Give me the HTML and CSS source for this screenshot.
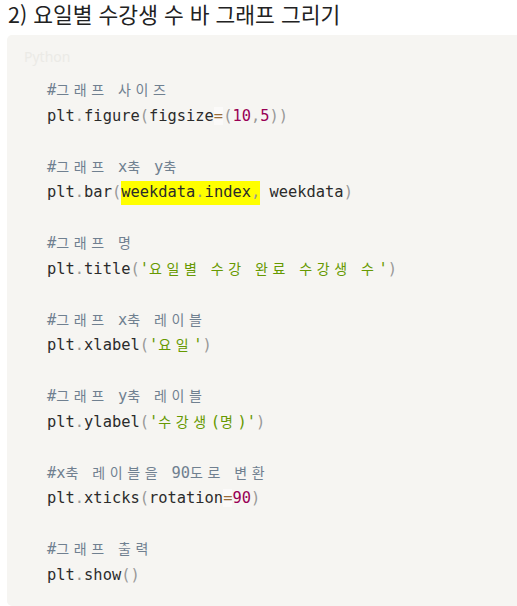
FILE: index.html
```html
<!DOCTYPE html>
<html lang="ko">
<head>
<meta charset="utf-8">
<link rel="stylesheet" href="styles.css">
</head>
<body>
<h3 class="title">2) 요일별 수강생 수 바 그래프 그리기</h3>
<div class="block">
<div class="lang">Python</div>
<pre class="code"><span class="c">#<span class="k">그래프</span> <span class="k">사이즈</span></span>
plt<span class="p">.</span>figure<span class="p">(</span>figsize<span class="o">=</span><span class="p">(</span><span class="n">10</span><span class="p">,</span><span class="n">5</span><span class="p">))</span>

<span class="c">#<span class="k">그래프</span> x<span class="k">축</span> y<span class="k">축</span></span>
plt<span class="p">.</span>bar<span class="p">(</span><mark class="hl">weekdata<span class="p">.</span>index<span class="p">,</span></mark> weekdata<span class="p">)</span>

<span class="c">#<span class="k">그래프</span> <span class="k">명</span></span>
plt<span class="p">.</span>title<span class="p">(</span><span class="s">'<span class="k">요일별</span> <span class="k">수강</span> <span class="k">완료</span> <span class="k">수강생</span> <span class="k">수</span>'</span><span class="p">)</span>

<span class="c">#<span class="k">그래프</span> x<span class="k">축</span> <span class="k">레이블</span></span>
plt<span class="p">.</span>xlabel<span class="p">(</span><span class="s">'<span class="k">요일</span>'</span><span class="p">)</span>

<span class="c">#<span class="k">그래프</span> y<span class="k">축</span> <span class="k">레이블</span></span>
plt<span class="p">.</span>ylabel<span class="p">(</span><span class="s">'<span class="k">수강생</span>(<span class="k">명</span>)'</span><span class="p">)</span>

<span class="c">#x<span class="k">축</span> <span class="k">레이블을</span> 90<span class="k">도로</span> <span class="k">변환</span></span>
plt<span class="p">.</span>xticks<span class="p">(</span>rotation<span class="o">=</span><span class="n">90</span><span class="p">)</span>

<span class="c">#<span class="k">그래프</span> <span class="k">출력</span></span>
plt<span class="p">.</span>show<span class="p">()</span></pre>
</div>
</body>
</html>
```
FILE: styles.css
```css
html, body {
  margin: 0;
  padding: 0;
  background: #ffffff;
}
body {
  padding: 0 0 0 7px;
  font-family: "Noto Sans CJK KR", "Noto Sans", sans-serif;
  overflow: hidden;
}
.title {
  margin: 0;
  padding: 0 0 0 1px;
  font-size: 21.5px;
  line-height: 27px;
  font-weight: 400;
  color: #222222;
}
.block {
  margin-top: 8px;
  background: #f6f5f2;
  border-radius: 5px 0 0 5px;
  padding: 12px 0 16px 17px;
  min-height: 571px;
  box-sizing: border-box;
}
.lang {
  font-family: "Noto Sans", sans-serif;
  font-size: 14px;
  line-height: 20px;
  color: #ebeae6;
}
.code {
  margin: 11px 0 0 0;
  padding: 0 0 0 23px;
  font-family: "DejaVu Sans Mono", "Noto Sans CJK KR", monospace;
  font-size: 15.4px;
  line-height: 25.5px;
  color: #2b2b2b;
  white-space: pre;
}
.k {
  font-family: "Noto Sans CJK KR", sans-serif;
  font-size: 14px;
  line-height: 14px;
  letter-spacing: 4.6px;
  font-weight: 400;
}
.c { color: #708090; }
.p { color: #999999; }
.o { color: #9a6e3a; background: rgba(255,255,255,0.5); }
.n { color: #990055; }
.s { color: #669900; }
.hl {
  background: #ffff00;
  color: inherit;
  padding: 2px 0 4px 0;
}
```
